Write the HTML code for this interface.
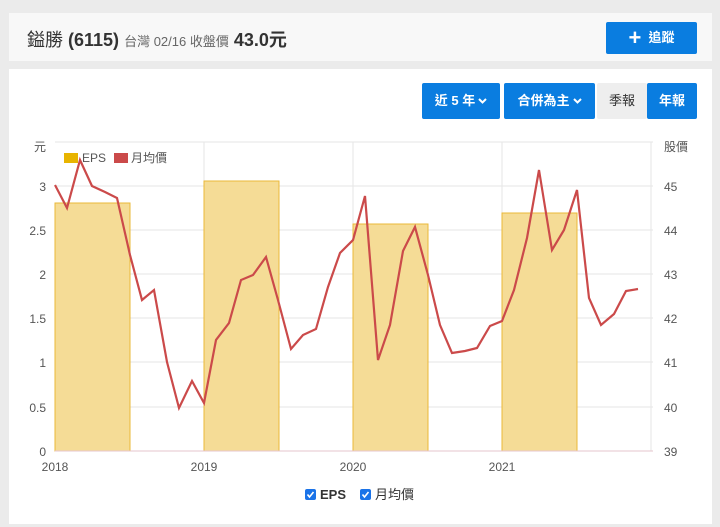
<!DOCTYPE html>
<html><head><meta charset="utf-8"><style>
body{margin:0;background:#ebebeb;font-family:"Liberation Sans","Noto Sans CJK TC",sans-serif;width:720px;height:527px;overflow:hidden;position:relative}
.card{position:absolute;left:9px;width:703px;background:#fff}
.h{top:13px;height:48px;background:#f8f8f8}
.t{position:absolute;left:18px;top:13px;font-size:18px;color:#333;white-space:nowrap}
.t small{font-size:13px;color:#666;font-weight:normal}
.btn{position:absolute;background:#0a7de0;color:#fff;font-size:13px;font-weight:bold;text-align:center;border-radius:2px}
.btn svg{vertical-align:1px;margin-left:3px}
</style></head><body>
<div class="card h"><div class="t">鎰勝 <b>(6115)</b> <small>台灣 02/16 收盤價</small> <b>43.0元</b></div>
<div class="btn" style="left:597px;top:9px;width:91px;height:32px;line-height:32px"><span style="font-size:22px;vertical-align:-3px">+</span>&nbsp; 追蹤</div></div>
<div class="card" style="top:69px;height:455px">
<div class="btn" style="left:413px;top:14px;width:78px;height:36px;line-height:36px">近 5 年<svg width="9" height="6"><path d="M1 1l3.5 3.5L8 1" stroke="#fff" stroke-width="2" fill="none"/></svg></div>
<div class="btn" style="left:495px;top:14px;width:91px;height:36px;line-height:36px">合併為主<svg width="9" height="6"><path d="M1 1l3.5 3.5L8 1" stroke="#fff" stroke-width="2" fill="none"/></svg></div>
<div class="btn" style="left:588px;top:14px;width:50px;height:36px;line-height:36px;background:#eee;color:#333;font-weight:normal">季報</div>
<div class="btn" style="left:638px;top:14px;width:50px;height:36px;line-height:36px">年報</div>
</div>
<svg style="position:absolute;left:0;top:0" width="720" height="527" font-family="Liberation Sans,Noto Sans CJK TC,sans-serif" font-size="12" fill="#555">
<g stroke="#e6e6e6">
<line x1="55" x2="653" y1="142" y2="142"/><line x1="55" x2="653" y1="186" y2="186"/><line x1="55" x2="653" y1="230" y2="230"/><line x1="55" x2="653" y1="274" y2="274"/><line x1="55" x2="653" y1="318" y2="318"/><line x1="55" x2="653" y1="362" y2="362"/><line x1="55" x2="653" y1="407" y2="407"/>
<line x1="204" x2="204" y1="142" y2="451"/><line x1="353" x2="353" y1="142" y2="451"/><line x1="502" x2="502" y1="142" y2="451"/><line x1="651" x2="651" y1="142" y2="451"/>
</g>
<g fill="#f5dc96" stroke="#eab838">
<rect x="55" y="203" width="75" height="248"/><rect x="204" y="181" width="75" height="270"/><rect x="353" y="224" width="75" height="227"/><rect x="502" y="213" width="75" height="238"/>
</g>
<line x1="55" x2="653" y1="451" y2="451" stroke="#e6c6cc"/>
<polyline fill="none" stroke="#cb4a4a" stroke-width="2.2" points="55,185 67,208 80,160 92,186 105,192 117,198 130,255 142,300 154,290 167,362 179,408 192,381 204,403 216,340 229,323 241,280 253,275 266,257 278,300 291,349 303,335 316,329 328,287 340,253 353,240 365,196 378,360 390,325 403,251 415,227 428,275 440,325 452,353 465,351 477,348 490,326 502,321 514,290 527,238 539,170 552,250 564,230 577,190 589,298 601,325 614,314 626,291 638,289"/>
<g text-anchor="end"><text x="46" y="151">元</text><text x="46" y="191">3</text><text x="46" y="235">2.5</text><text x="46" y="279">2</text><text x="46" y="323">1.5</text><text x="46" y="367">1</text><text x="46" y="412">0.5</text><text x="46" y="456">0</text></g>
<g><text x="664" y="151">股價</text><text x="664" y="191">45</text><text x="664" y="235">44</text><text x="664" y="279">43</text><text x="664" y="323">42</text><text x="664" y="367">41</text><text x="664" y="412">40</text><text x="664" y="456">39</text></g>
<g text-anchor="middle"><text x="55" y="471">2018</text><text x="204" y="471">2019</text><text x="353" y="471">2020</text><text x="502" y="471">2021</text></g>
<rect x="64" y="153" width="14" height="10" fill="#e8b400"/><text x="82" y="162">EPS</text>
<rect x="114" y="153" width="14" height="10" fill="#cb4a4a"/><text x="131" y="162">月均價</text>
<rect x="305" y="489" width="11" height="11" rx="2" fill="#1a73e8"/><path d="M307.5 494.5l2 2.5 4-5" stroke="#fff" stroke-width="1.6" fill="none"/>
<text x="320" y="499" font-weight="bold" fill="#333" font-size="13">EPS</text>
<rect x="360" y="489" width="11" height="11" rx="2" fill="#1a73e8"/><path d="M362.5 494.5l2 2.5 4-5" stroke="#fff" stroke-width="1.6" fill="none"/>
<text x="375" y="499" fill="#333" font-size="13">月均價</text>
</svg>
</body></html>
